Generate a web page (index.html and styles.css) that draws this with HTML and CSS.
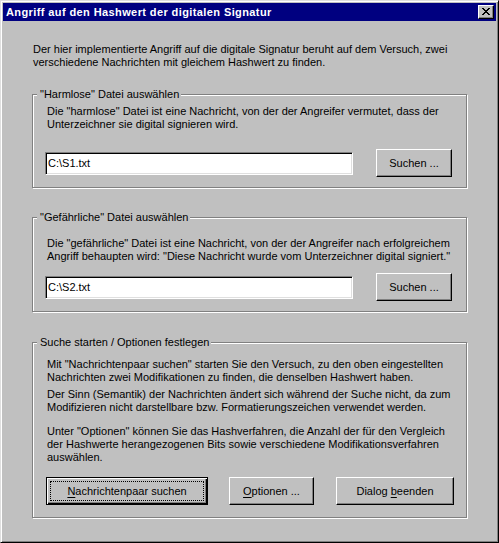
FILE: index.html
```html
<!DOCTYPE html>
<html lang="de">
<head>
<meta charset="utf-8">
<title>Angriff auf den Hashwert der digitalen Signatur</title>
<link rel="stylesheet" href="styles.css">
</head>
<body>
<div class="window">
  <div class="titlebar">
    <span class="title">Angriff auf den Hashwert der digitalen Signatur</span>
    <span class="close" aria-label="Schließen">
      <svg width="8" height="7" viewBox="0 0 8 7" shape-rendering="crispEdges">
        <rect x="0" y="0" width="2" height="1"/><rect x="6" y="0" width="2" height="1"/>
        <rect x="1" y="1" width="2" height="1"/><rect x="5" y="1" width="2" height="1"/>
        <rect x="2" y="2" width="4" height="1"/>
        <rect x="3" y="3" width="2" height="1"/>
        <rect x="2" y="4" width="4" height="1"/>
        <rect x="1" y="5" width="2" height="1"/><rect x="5" y="5" width="2" height="1"/>
        <rect x="0" y="6" width="2" height="1"/><rect x="6" y="6" width="2" height="1"/>
      </svg>
    </span>
  </div>
  <div class="client">
    <p class="intro">Der hier implementierte Angriff auf die digitale Signatur beruht auf dem Versuch, zwei<br>verschiedene Nachrichten mit gleichem Hashwert zu finden.</p>

    <fieldset class="group g1">
      <legend>"Harmlose" Datei auswählen</legend>
      <p class="desc">Die "harmlose" Datei ist eine Nachricht, von der der Angreifer vermutet, dass der<br>Unterzeichner sie digital signieren wird.</p>
      <div class="filerow">
        <div class="field">C:\S1.txt</div>
        <button class="btn search">Suchen ...</button>
      </div>
    </fieldset>

    <fieldset class="group g2">
      <legend>"Gefährliche" Datei auswählen</legend>
      <p class="desc">Die "gefährliche" Datei ist eine Nachricht, von der der Angreifer nach erfolgreichem<br>Angriff behaupten wird: "Diese Nachricht wurde vom Unterzeichner digital signiert."</p>
      <div class="filerow">
        <div class="field">C:\S2.txt</div>
        <button class="btn search">Suchen ...</button>
      </div>
    </fieldset>

    <fieldset class="group g3">
      <legend>Suche starten / Optionen festlegen</legend>
      <p class="desc p1">Mit "Nachrichtenpaar suchen" starten Sie den Versuch, zu den oben eingestellten<br>Nachrichten zwei Modifikationen zu finden, die denselben Hashwert haben.</p>
      <p class="desc p2">Der Sinn (Semantik) der Nachrichten ändert sich während der Suche nicht, da zum<br>Modifizieren nicht darstellbare bzw. Formatierungszeichen verwendet werden.</p>
      <p class="desc p3">Unter "Optionen" können Sie das Hashverfahren, die Anzahl der für den Vergleich<br>der Hashwerte herangezogenen Bits sowie verschiedene Modifikationsverfahren<br>auswählen.</p>
      <div class="actions">
        <button class="btn default b-pair"><u>N</u>achrichtenpaar suchen</button>
        <button class="btn b-opt"><u>O</u>ptionen ...</button>
        <button class="btn b-end">Dialog <u>b</u>eenden</button>
      </div>
    </fieldset>
  </div>
</div>
</body>
</html>
```

FILE: styles.css
```css
html, body {
  margin: 0;
  padding: 0;
  background: #c0c0c0;
}

body {
  font-family: "Liberation Sans", Arial, sans-serif;
  font-size: 11px;
  line-height: 13px;
  color: #000;
}

.window {
  box-sizing: border-box;
  width: 499px;
  height: 543px;
  padding: 2px;
  background: #c0c0c0;
  border: 1px solid;
  border-color: #dfdfdf #000 #000 #dfdfdf;
  box-shadow: inset 1px 1px #fff, inset -1px -1px #808080;
}

.titlebar {
  height: 18px;
  background: #000080;
  color: #fff;
  display: flex;
  align-items: center;
  justify-content: space-between;
  padding: 0 2px 0 3px;
}

.title {
  font-weight: bold;
  white-space: nowrap;
  line-height: 18px;
  letter-spacing: 0.4px;
}

.close {
  box-sizing: border-box;
  width: 16px;
  height: 14px;
  background: #c0c0c0;
  border: 1px solid;
  border-color: #fff #000 #000 #fff;
  box-shadow: inset -1px -1px #808080;
  display: flex;
  align-items: center;
  justify-content: center;
  padding: 0 1px 1px 0;
}

.close svg {
  display: block;
  fill: #000;
}

.client {
  padding: 22px 0 0 29px;
}

p {
  margin: 0;
  white-space: nowrap;
}

.intro {
  margin-left: 1px;
}

.group {
  box-sizing: border-box;
  width: 435px;
  margin: 0;
  padding: 0 0 10px 0;
  border: 1px solid #808080;
  box-shadow: inset 1px 1px #fff, 1px 1px #fff;
  min-width: 0;
}

.group legend {
  margin-left: 4px;
  padding: 0 2px 0 3px;
  background: #c0c0c0;
  line-height: 13px;
  white-space: nowrap;
}

.g1 { margin-top: 19px; }
.g2 { margin-top: 23px; }
.g3 { margin-top: 24px; padding-bottom: 12px; }

.desc {
  margin-left: 14px;
}

.g1 .desc { margin-top: 4px; }
.g2 .desc { margin-top: 13px; }
.g3 .p1 { margin-top: 9px; }
.g3 .p2 { margin-top: 4px; }
.g3 .p3 { margin-top: 11px; }

.filerow {
  display: flex;
  align-items: center;
  justify-content: space-between;
  height: 28px;
  margin: 18px 14px 0 12px;
}

.g2 .filerow { margin-top: 10px; }

.field {
  box-sizing: border-box;
  width: 308px;
  height: 23px;
  background: #fff;
  border: 1px solid;
  border-color: #808080 #fff #fff #808080;
  box-shadow: inset 1px 1px #000, inset -1px -1px #dfdfdf;
  padding: 0 2px;
  line-height: 21px;
  white-space: nowrap;
}

.btn {
  box-sizing: border-box;
  height: 28px;
  margin: 0;
  padding: 0;
  font: inherit;
  line-height: 13px;
  color: #000;
  background: #c0c0c0;
  border: 1px solid;
  border-color: #fff #000 #000 #fff;
  border-radius: 0;
  box-shadow: inset -1px -1px #808080;
  white-space: nowrap;
}

.btn u {
  text-decoration: underline;
  text-underline-offset: 2px;
}

.search { width: 76px; }

.actions {
  display: flex;
  align-items: center;
  margin: 13px 0 0 13px;
}

.b-pair { width: 162px; }
.b-opt { width: 85px; margin-left: 21px; }
.b-end { width: 118px; margin-left: 22px; }

.btn.default {
  border-color: #000;
  box-shadow: inset 1px 1px #fff, inset -1px -1px #000, inset -2px -2px #808080;
  outline: 1px dotted #000;
  outline-offset: -5px;
}
```
